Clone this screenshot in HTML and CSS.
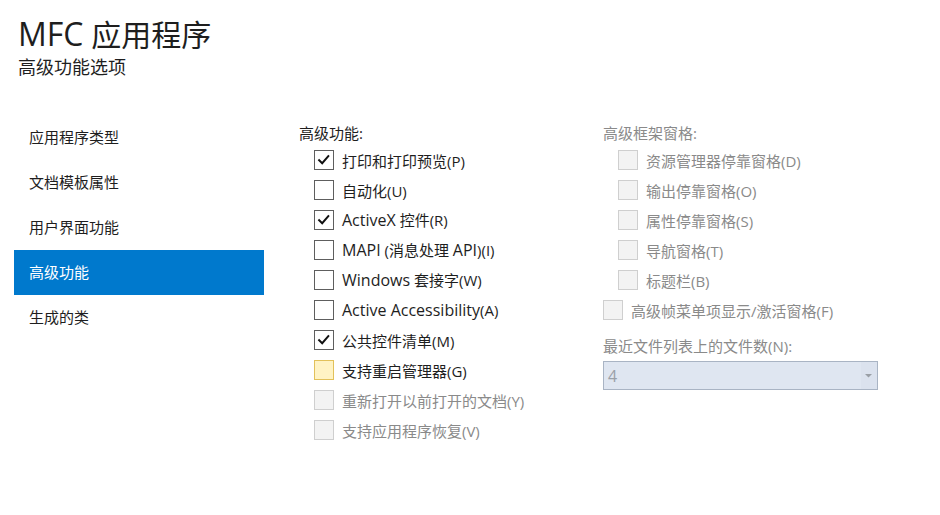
FILE: index.html
```html
<!DOCTYPE html>
<html lang="zh-CN">
<head>
<meta charset="utf-8">
<title>MFC 应用程序</title>
<link rel="stylesheet" href="styles.css">
</head>
<body>
<div class="page">
  <header class="header">
    <h1 class="title"><span class="lat">MFC</span> 应用程序</h1>
    <div class="subtitle">高级功能选项</div>
  </header>
  <div class="main">
    <nav class="nav">
      <div class="nav-item">应用程序类型</div>
      <div class="nav-item">文档模板属性</div>
      <div class="nav-item">用户界面功能</div>
      <div class="nav-item active">高级功能</div>
      <div class="nav-item">生成的类</div>
    </nav>
    <section class="col col-mid">
      <div class="group-title">高级功能:</div>
      <div class="opts">
        <label class="opt"><span class="box checked"><svg viewBox="0 0 20 20"><path d="M4.6 10.2 L8 13.6 L14.8 5.8"/></svg></span><span>打印和打印预览(P)</span></label>
        <label class="opt"><span class="box"></span><span>自动化(U)</span></label>
        <label class="opt"><span class="box checked"><svg viewBox="0 0 20 20"><path d="M4.6 10.2 L8 13.6 L14.8 5.8"/></svg></span><span><span class="lat">ActiveX</span> 控件(R)</span></label>
        <label class="opt"><span class="box"></span><span><span class="lat">MAPI</span> (消息处理 <span class="lat">API</span>)(I)</span></label>
        <label class="opt"><span class="box"></span><span><span class="lat">Windows</span> 套接字(W)</span></label>
        <label class="opt"><span class="box"></span><span><span class="lat">Active Accessibility</span>(A)</span></label>
        <label class="opt"><span class="box checked"><svg viewBox="0 0 20 20"><path d="M4.6 10.2 L8 13.6 L14.8 5.8"/></svg></span><span>公共控件清单(M)</span></label>
        <label class="opt"><span class="box focus"></span><span>支持重启管理器(G)</span></label>
        <label class="opt disabled"><span class="box"></span><span>重新打开以前打开的文档(Y)</span></label>
        <label class="opt disabled"><span class="box"></span><span>支持应用程序恢复(V)</span></label>
      </div>
    </section>
    <section class="col col-right">
      <div class="group-title muted">高级框架窗格:</div>
      <div class="opts">
        <label class="opt disabled"><span class="box"></span><span>资源管理器停靠窗格(D)</span></label>
        <label class="opt disabled"><span class="box"></span><span>输出停靠窗格(O)</span></label>
        <label class="opt disabled"><span class="box"></span><span>属性停靠窗格(S)</span></label>
        <label class="opt disabled"><span class="box"></span><span>导航窗格(T)</span></label>
        <label class="opt disabled"><span class="box"></span><span>标题栏(B)</span></label>
      </div>
      <label class="opt disabled"><span class="box"></span><span>高级帧菜单项显示/激活窗格(F)</span></label>
      <div class="field-label muted">最近文件列表上的文件数(N):</div>
      <div class="select">
        <span class="select-value">4</span>
        <span class="select-arrow"><svg viewBox="0 0 8 4"><path d="M0 0 H7 L3.5 3.5 Z"/></svg></span>
      </div>
    </section>
  </div>
</div>
</body>
</html>
```
FILE: styles.css
```css
* { box-sizing: border-box; }
html, body { margin: 0; padding: 0; background: #ffffff; }
body {
  font-family: "Open Sans", "Noto Sans CJK SC", sans-serif;
  color: #1e1e1e;
  font-size: 15px;
}
.page { width: 940px; height: 515px; overflow: hidden; }
.header { padding: 14px 0 0 18px; height: 115px; }
.title {
  margin: 0;
  font-weight: 400;
  font-size: 30px;
  line-height: 40px;
  color: #1e1e1e;
}
.title .lat { font-size: 32px; }
.subtitle {
  font-size: 18px;
  line-height: 24px;
  color: #1e1e1e;
}
.lat { font-size: 16px; }
.main { display: flex; }
.nav { width: 250px; margin-left: 14px; }
.nav-item {
  height: 45px;
  line-height: 45px;
  padding-left: 15px;
  font-size: 15px;
  color: #1e1e1e;
}
.nav-item.active { background: #0079cd; color: #ffffff; }
.col { padding-top: 8px; }
.col-mid { margin-left: 35px; width: 304px; }
.col-right { width: 300px; }
.group-title { height: 22px; line-height: 20px; font-size: 15px; color: #1e1e1e; }
.muted { color: #8a8a8a; }
.opts { padding-left: 15px; }
.opt {
  display: flex;
  align-items: center;
  height: 30px;
  gap: 8px;
  white-space: nowrap;
}
.box {
  width: 20px;
  height: 20px;
  border: 1px solid #5e5e5e;
  background: #ffffff;
  flex: none;
  display: flex;
}
.box svg { width: 18px; height: 18px; }
.box svg path { fill: none; stroke: #111111; stroke-width: 2.2; stroke-linecap: square; }
.box.focus { background: #fff3c4; border-color: #e2c15a; }
.opt.disabled { color: #8a8a8a; }
.opt.disabled .box { background: #f3f3f3; border-color: #cfcfcf; }
.field-label { margin-top: 9px; line-height: 24px; }
.select {
  margin-top: 3px;
  width: 275px;
  height: 29px;
  border: 1px solid #a9b4c4;
  background: #dfe6f1;
  display: flex;
  align-items: center;
  color: #9aa0a8;
}
.select-value { flex: 1; padding-left: 4px; font-size: 16px; }
.select-arrow {
  width: 16px;
  height: 100%;
  display: flex;
  align-items: center;
  justify-content: center;
  background: #dbe2ee;
}
.select-arrow svg { width: 8px; height: 4px; }
.select-arrow path { fill: #9a9fa6; }
```
